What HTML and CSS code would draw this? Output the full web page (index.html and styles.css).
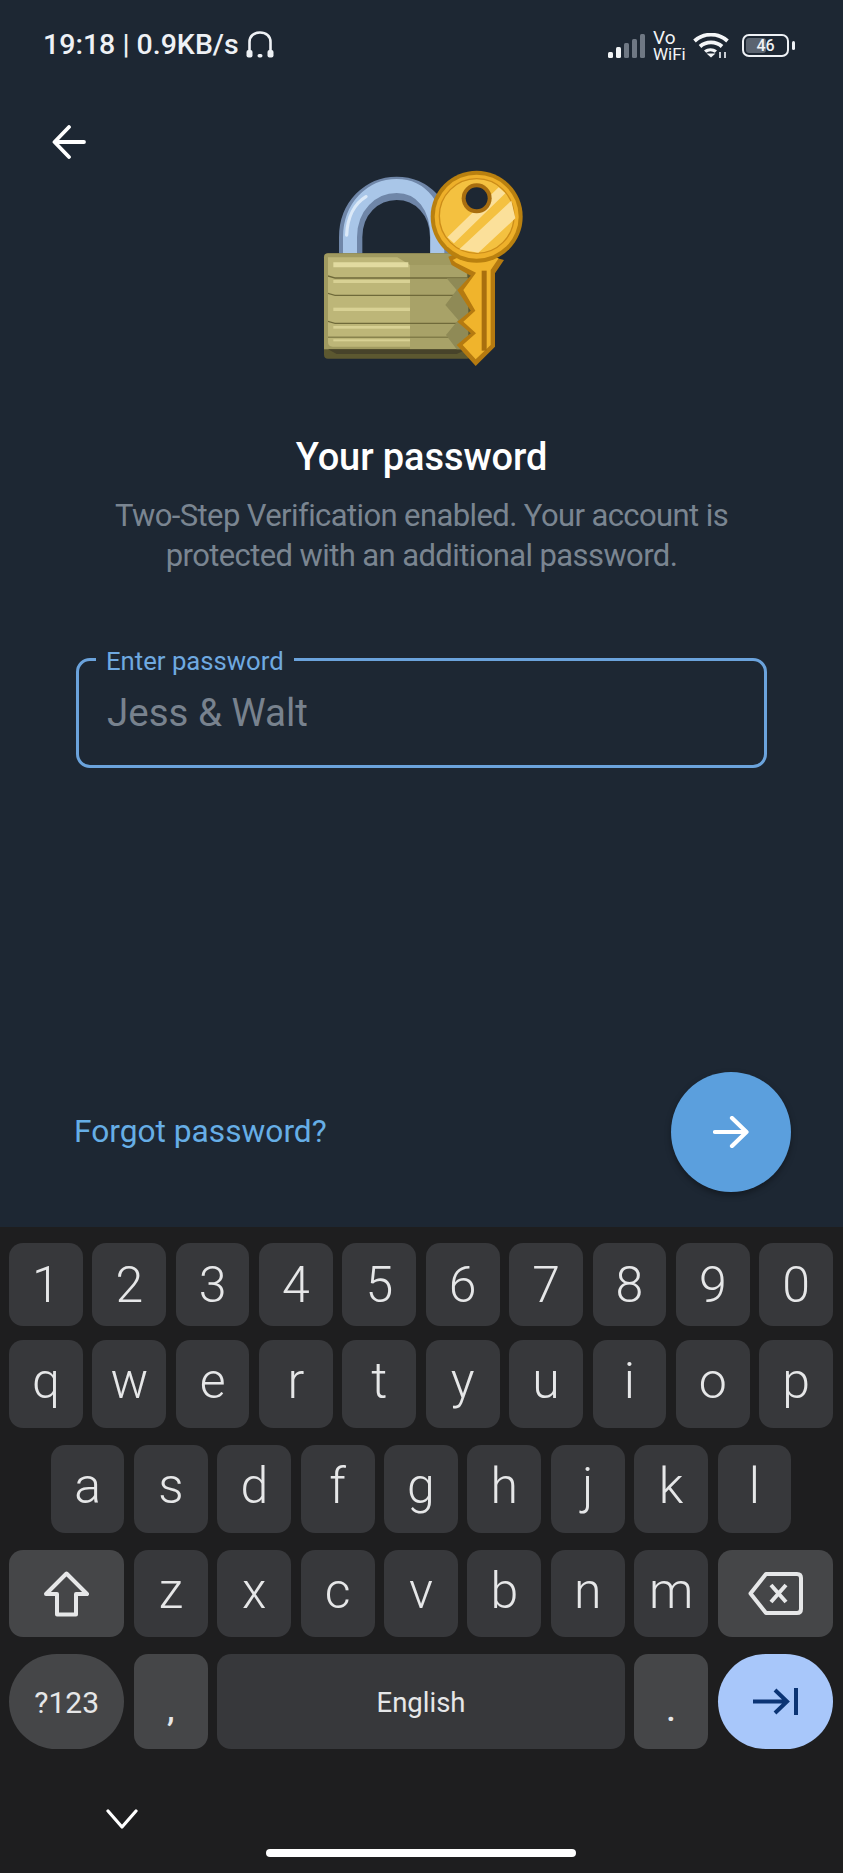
FILE: index.html
```html
<!DOCTYPE html>
<html lang="en">
<head>
<meta charset="utf-8">
<title>Your password</title>
<link rel="stylesheet" href="styles.css">
</head>
<body>
<div class="screen">
  <main class="main">
    <header class="status">
      <div class="status-left">
        <span>19:18 | 0.9KB/s</span>
        <svg class="headset" viewBox="0 0 28 27"><path d="M3.500 20V11C3.500 5 8 1.500 14 1.500s10.500 3.500 10.500 9.500v9" fill="none" stroke="#eef1f5" stroke-width="2.600"/><rect x="0.500" y="19" width="6" height="7.500" rx="2" fill="#eef1f5"/><rect x="21.500" y="19" width="6" height="7.500" rx="2" fill="#eef1f5"/><rect x="11.500" y="23" width="5" height="3.500" rx="1.700" fill="#eef1f5"/></svg>
      </div>
      <div class="status-right">
        <svg class="signal" viewBox="0 0 37 24"><rect x="0" y="18" width="5" height="6" rx="1.500" fill="#f2f4f6"/><rect x="8" y="13" width="5" height="11" rx="1.500" fill="#f2f4f6"/><rect x="16" y="9" width="5" height="15" rx="1.500" fill="#6f7884"/><rect x="24" y="5" width="5" height="19" rx="1.500" fill="#6f7884"/><rect x="32" y="0" width="5" height="24" rx="1.500" fill="#6f7884"/></svg>
        <div class="vowifi"><span class="vo">Vo</span><span class="wf">WiFi</span></div>
        <svg class="wifi" viewBox="0 0 36 25"><g fill="none" stroke="#f4f6f8" stroke-width="3.800"><path d="M1.500 8C11 -0.500 25 -0.500 34.500 8"/><path d="M7 13.500C13 8 23 8 29 13.500"/></g><path d="M11 17.500C15 14.500 20 14.500 24 17.500l-2.200 2.200C19 17.700 16 17.700 13.200 19.700z" fill="#f4f6f8"/><path d="M13.500 20.500l4.500 4 4.500-4z" fill="#f4f6f8"/><path d="M27 25v-6M32 19v6" stroke="#c9ced4" stroke-width="2"/></svg>
        <div class="battery"><span class="battery-fill"></span><span class="battery-num">46</span></div>
        <span class="battery-nub"></span>
      </div>
    </header>

    <button class="back" aria-label="Back">
      <svg viewBox="0 0 34 34"><path d="M32 17H3M17 2 2.500 17 17 32" fill="none" stroke="#fff" stroke-width="3.800" stroke-linecap="round" stroke-linejoin="round"/></svg>
    </button>

    <svg class="lock" viewBox="0 0 720 690">
      <path d="M152 320V262C152 175 215 115 290 115S425 175 425 262v58" fill="none" stroke="#6f86a8" stroke-width="70"/>
      <path d="M150 320V262C150 170 215 108 290 108S412 170 412 262v58" fill="none" stroke="#a9c6e8" stroke-width="42"/>
      <path d="M140 255C142 200 165 160 198 140" fill="none" stroke="#dbe9f8" stroke-width="10" stroke-linecap="round"/>
      <rect x="72" y="310" width="440" height="316" rx="12" fill="#5c5830"/>
      <path d="M72 322Q72 310 84 310H502V598H72z" fill="#a09a60"/>
      <path d="M84 322H292L330 345V590H98Q84 590 84 576z" fill="#bdb678"/>
      <path d="M330 345H500V598H330z" fill="#a8a268"/>
      <path d="M100 337H325V352H100z" fill="#e2dba0"/>
      <g fill="#6f6a3a"><path d="M84 376 105 382H502V386H105L84 380z"/><path d="M84 428 105 434H502V438H105L84 432z"/><path d="M84 512 105 518H502V522H105L84 516z"/><rect x="84" y="560" width="418" height="3"/></g>
      <g fill="#d8d194"><rect x="100" y="390" width="230" height="9"/><rect x="100" y="473" width="230" height="10"/><rect x="100" y="528" width="230" height="8"/><rect x="100" y="568" width="230" height="6"/></g>
      <path d="M84 598H502L470 612H110z" fill="#47432a"/>
      <path d="M440 385 470 420 436 465 475 510 438 555 470 598H505V385z" fill="#8f8a56"/>
      <path d="M445 320 455 345 512 377 472 420 512 482 472 515 512 550 470 585 527 648 585 590V370L612 330 500 300z" fill="#b57a10"/>
      <path d="M458 330 468 338 528 368 490 420 526 482 490 515 528 550 488 585 527 628 572 585V360L596 325 500 310z" fill="#f0b42c"/>
      <rect x="545" y="362" width="15" height="240" fill="#a86f0e"/>
      <circle cx="530" cy="200" r="138" fill="#b9800f"/>
      <circle cx="530" cy="200" r="126" fill="#eeb02a"/>
      <circle cx="530" cy="198" r="112" fill="#f4c140" stroke="#cc8d1a" stroke-width="4"/>
      <path d="M442 262 596 112 616 130 462 280zM478 298 634 152 646 205 535 308z" fill="#fbe09a"/>
      <circle cx="530" cy="145" r="45" fill="#a86e0f"/>
      <circle cx="530" cy="145" r="33" fill="#1d2733"/>
    </svg>

    <h1 class="title">Your password</h1>
    <p class="subtitle">Two-Step Verification enabled. Your account is<br>protected with an additional password.</p>

    <div class="field">
      <span class="field-label">Enter password</span>
      <span class="field-value">Jess &amp; Walt</span>
    </div>

    <div class="actions">
      <a class="forgot">Forgot password?</a>
      <button class="fab" aria-label="Next">
        <svg viewBox="0 0 36 32"><path d="M2 16H33M19 2 33.500 16 19 30" fill="none" stroke="#fff" stroke-width="4.200" stroke-linecap="round" stroke-linejoin="round"/></svg>
      </button>
    </div>
  </main>

  <section class="keyboard">
    <div class="row row-num">
      <div class="key">1</div><div class="key">2</div><div class="key">3</div><div class="key">4</div><div class="key">5</div><div class="key">6</div><div class="key">7</div><div class="key">8</div><div class="key">9</div><div class="key">0</div>
    </div>
    <div class="row row-top">
      <div class="key">q</div><div class="key">w</div><div class="key">e</div><div class="key">r</div><div class="key">t</div><div class="key">y</div><div class="key">u</div><div class="key">i</div><div class="key">o</div><div class="key">p</div>
    </div>
    <div class="row row-mid">
      <div class="key start-2">a</div><div class="key">s</div><div class="key">d</div><div class="key">f</div><div class="key">g</div><div class="key">h</div><div class="key">j</div><div class="key">k</div><div class="key">l</div>
    </div>
    <div class="row row-low">
      <div class="key wide fn icon" aria-label="Shift">
        <svg class="ic-shift" viewBox="0 0 47 46"><path d="M23.500 2.500 44 23H33V43.500H14V23H3z" fill="none" stroke="#e6e7e8" stroke-width="4" stroke-linejoin="round"/></svg>
      </div>
      <div class="key">z</div><div class="key">x</div><div class="key">c</div><div class="key">v</div><div class="key">b</div><div class="key">n</div><div class="key">m</div>
      <div class="key wide fn icon" aria-label="Backspace">
        <svg class="ic-back" viewBox="0 0 55 43"><path d="M18 2H49Q53 2 53 6V37Q53 41 49 41H18L2.500 21.500z" fill="none" stroke="#e6e7e8" stroke-width="4" stroke-linejoin="round"/><path d="M23 13 38 30M38 13 23 30" fill="none" stroke="#e6e7e8" stroke-width="4"/></svg>
      </div>
    </div>
    <div class="row row-bot">
      <div class="key wide fn round sym">?123</div>
      <div class="key fn punct">,</div>
      <div class="key space">English</div>
      <div class="key fn punct">.</div>
      <div class="key wide round enter" aria-label="Next field">
        <svg class="ic-tab" viewBox="0 0 45 27"><path d="M0 13.500H33M22 2 34 13.500 22 25M43 0V27" fill="none" stroke="#0b3474" stroke-width="4"/></svg>
      </div>
    </div>
    <div class="kb-foot">
      <svg class="chev" viewBox="0 0 32 20"><path d="M2 2 16 18 30 2" fill="none" stroke="#fff" stroke-width="3.200" stroke-linecap="round" stroke-linejoin="round"/></svg>
    </div>
    <div class="home"></div>
  </section>
</div>
</body>
</html>
```
FILE: styles.css
```css
* { box-sizing: border-box; }
html, body { margin: 0; padding: 0; }
body { background: #1d2733; font-family: Roboto, "Liberation Sans", sans-serif; }
.screen { width: 843px; height: 1873px; display: flex; flex-direction: column; overflow: hidden; }

.main { position: relative; height: 1227px; background: #1d2733; display: flex; flex-direction: column; align-items: center; }

.status { width: 100%; height: 90px; padding: 28px 48px 0 43px; display: flex; justify-content: space-between; align-items: flex-start; color: #eef1f5; }
.status-left { display: flex; align-items: center; gap: 7px; font-size: 28.500px; font-weight: 500; line-height: 34px; }
.headset { width: 28px; height: 27px; margin-top: -1px; }
.status-right { display: flex; align-items: center; height: 34px; }
.signal { width: 37px; height: 24px; margin-right: 8px; margin-top: 1px; }
.vowifi { display: flex; flex-direction: column; font-weight: 400; color: #f2f4f6; width: 33px; margin-right: 7px; }
.vo { font-size: 19px; line-height: 18px; }
.wf { font-size: 17px; line-height: 15px; }
.wifi { width: 36px; height: 25px; margin-right: 13px; }
.battery { position: relative; width: 47px; height: 23px; border: 2.500px solid #eef1f5; border-radius: 7px; display: flex; align-items: center; justify-content: center; }
.battery-fill { position: absolute; left: 2px; top: 2px; bottom: 2px; width: 20px; background: #5b6470; border-radius: 3px; }
.battery-num { position: relative; font-size: 16px; font-weight: 500; color: #eef1f5; }
.battery-nub { width: 3px; height: 9px; margin-left: 3px; background: #eef1f5; border-radius: 2px; }

.back { position: absolute; left: 52px; top: 125px; width: 34px; height: 34px; padding: 0; border: 0; background: none; }
.back svg { display: block; width: 34px; height: 34px; }

.lock { width: 240px; height: 230px; margin: 60px 3px 0 0; flex: none; }

.title { margin: 55px 0 0; font-size: 38px; line-height: 44px; font-weight: 500; color: #fff; text-align: center; letter-spacing: -0.1px; }
.subtitle { margin: 17px 0 0; font-size: 31px; line-height: 40px; color: #7a8591; text-align: center; letter-spacing: -0.6px; }

.field { position: relative; width: 691px; height: 110px; margin-top: 82px; border: 3.500px solid #6ba3dc; border-radius: 14px; display: flex; align-items: center; padding: 0 0 0 28px; }
.field-label { position: absolute; left: 17px; top: -15px; padding: 0 10px; background: #1d2733; font-size: 25.700px; line-height: 30px; color: #6fa9e0; }
.field-value { font-size: 38.500px; line-height: 44px; color: #78828e; }

.actions { margin-top: auto; width: 100%; padding: 0 52px 35px 74px; display: flex; justify-content: space-between; align-items: center; }
.forgot { font-size: 31.700px; line-height: 40px; color: #66aee6; }
.fab { width: 120px; height: 120px; padding: 0; border: 0; border-radius: 50%; background: #5b9fdd; box-shadow: 0 3px 6px rgba(0,0,0,.35); display: flex; align-items: center; justify-content: center; }
.fab svg { width: 36px; height: 32px; }

.keyboard { flex: 1; background: #1e1e1f; padding: 16px 10px 0 9px; display: flex; flex-direction: column; }
.row { display: grid; grid-template-columns: repeat(20, 1fr); column-gap: 9.600px; }
.row-num { height: 83px; }
.row-top { height: 88px; margin-top: 14px; }
.row-mid { height: 88px; margin-top: 17px; }
.row-low { height: 87px; margin-top: 17px; }
.row-bot { height: 95px; margin-top: 17px; }

.key { grid-column: span 2; background: #37383b; border-radius: 14px; color: #e6e7e8; font-size: 50px; font-weight: 350; display: flex; align-items: center; justify-content: center; }
.row-top .key, .row-mid .key, .row-low .key { padding-bottom: 6px; }
.start-2 { grid-column: 2 / span 2; }
.key.wide { grid-column: span 3; }
.key.fn { background: #454648; }
.row-low .key.icon { padding-bottom: 0; }
.key.space { grid-column: span 10; font-size: 27.500px; font-weight: 400; padding-top: 2px; }
.key.round { border-radius: 48px; }
.key.sym { font-size: 30px; font-weight: 400; padding-top: 2px; }
.key.punct { font-size: 34px; font-weight: 500; padding-top: 14px; }
.key.enter { background: #a8c7fa; }

.ic-shift { width: 47px; height: 46px; }
.ic-back { width: 55px; height: 43px; }
.ic-tab { width: 45px; height: 27px; }

.kb-foot { margin-top: 60px; padding-left: 97px; height: 20px; }
.chev { display: block; width: 32px; height: 20px; }
.home { align-self: center; width: 310px; height: 8px; margin-top: 20px; background: #fff; border-radius: 4px; }
```
